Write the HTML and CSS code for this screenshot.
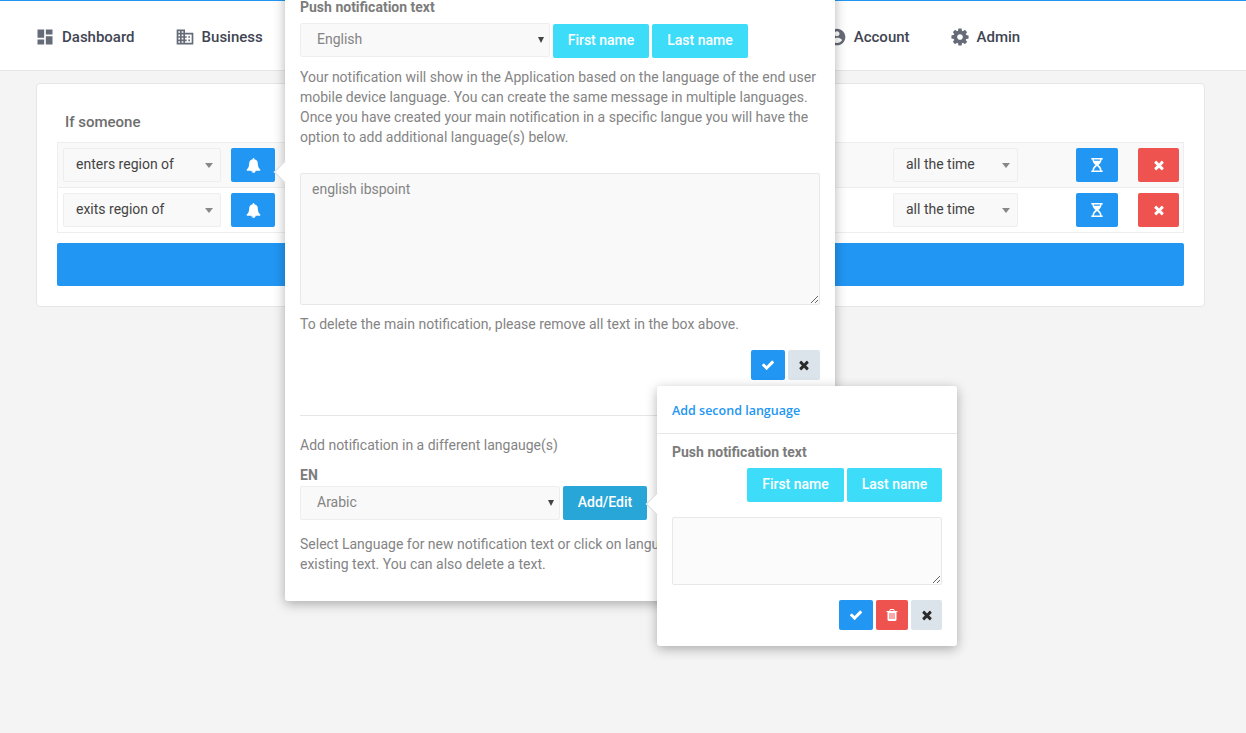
FILE: index.html
```html
<!DOCTYPE html>
<html lang="en">
<head>
  <meta charset="UTF-8" />
  <meta name="viewport" content="width=device-width, initial-scale=1" />
  <title>Push notification rules</title>
  <link rel="stylesheet" href="styles.css">
</head>
<body>
  <svg class="sprite" width="0" height="0">
    <symbol id="i-check" viewBox="0 0 1792 1792"><path d="M1671 566q0 40-28 68l-724 724-136 136q-28 28-68 28t-68-28l-136-136-362-362q-28-28-28-68t28-68l136-136q28-28 68-28t68 28l294 295 656-657q28-28 68-28t68 28l136 136q28 28 28 68z"/></symbol>
    <symbol id="i-times" viewBox="0 0 1792 1792"><path d="M1490 1322q0 40-28 68l-136 136q-28 28-68 28t-68-28l-294-294-294 294q-28 28-68 28t-68-28l-136-136q-28-28-28-68t28-68l294-294-294-294q-28-28-28-68t28-68l136-136q28-28 68-28t68 28l294 294 294-294q28-28 68-28t68 28l136 136q28 28 28 68t-28 68l-294 294 294 294q28 28 28 68z"/></symbol>
    <symbol id="i-bell" viewBox="0 0 1792 1792"><path d="M912 1696q0-16-16-16-59 0-101.5-42.5t-42.5-101.5q0-16-16-16t-16 16q0 73 51.5 124.5t124.5 51.5q16 0 16-16zm816-288q0 52-38 90t-90 38h-448q0 106-75 181t-181 75-181-75-75-181h-448q-52 0-90-38t-38-90q50-42 91-88t85-119.5 74.5-158.5 50-206 19.5-260q0-152 117-282.5t307-158.5q-8-19-8-39 0-40 28-68t68-28 68 28 28 68q0 20-8 39 190 28 307 158.5t117 282.5q0 139 19.5 260t50 206 74.5 158.5 85 119.5 91 88z"/></symbol>
    <symbol id="i-hourglass" viewBox="0 0 16 16"><path fill-rule="evenodd" d="M1.500 0h13v1.600h-1.300c0 3-1.700 5-3.600 6.400 1.900 1.400 3.600 3.400 3.600 6.400h1.300V16h-13v-1.600h1.300c0-3 1.700-5 3.600-6.400-1.900-1.400-3.600-3.400-3.600-6.400H1.500V0zm3 1.600c0 .4.100.9.200 1.400h6.600c.1-.5.200-1 .2-1.400h-7zM8 9c-1.900 1.200-3.300 3-3.500 5.400h7C11.300 12 9.900 10.200 8 9z"/></symbol>
    <symbol id="i-trash" viewBox="0 0 1792 1792"><path d="M704 1376v-704q0-14-9-23t-23-9h-64q-14 0-23 9t-9 23v704q0 14 9 23t23 9h64q14 0 23-9t9-23zm256 0v-704q0-14-9-23t-23-9h-64q-14 0-23 9t-9 23v704q0 14 9 23t23 9h64q14 0 23-9t9-23zm256 0v-704q0-14-9-23t-23-9h-64q-14 0-23 9t-9 23v704q0 14 9 23t23 9h64q14 0 23-9t9-23zm-544-992h448l-48-117q-7-9-17-11h-317q-10 2-17 11zm928 32v64q0 14-9 23t-23 9h-96v948q0 83-47 143.5t-113 60.5h-832q-66 0-113-58.5t-47-141.5v-952h-96q-14 0-23-9t-9-23v-64q0-14 9-23t23-9h309l70-167q15-37 54-63t79-26h320q40 0 79 26t54 63l70 167h309q14 0 23 9t9 23z"/></symbol>
  </svg>

  <nav class="navbar">
    <a class="nav-item">
      <svg class="nav-icon" viewBox="0 0 24 24"><path d="M3 13h8V3H3v10zm0 8h8v-6H3v6zm10 0h8V11h-8v10zm0-18v6h8V3h-8z"/></svg>
      Dashboard
    </a>
    <a class="nav-item">
      <svg class="nav-icon" viewBox="0 0 24 24"><path d="M12 7V3H2v18h20V7H12zM6 19H4v-2h2v2zm0-4H4v-2h2v2zm0-4H4V9h2v2zm0-4H4V5h2v2zm4 12H8v-2h2v2zm0-4H8v-2h2v2zm0-4H8V9h2v2zm0-4H8V5h2v2zm10 12h-8v-2h2v-2h-2v-2h2v-2h-2V9h8v10zm-2-8h-2v2h2v-2zm0 4h-2v2h2v-2z"/></svg>
      Business
    </a>
    <div class="nav-spacer"></div>
    <a class="nav-item">
      <svg class="nav-icon" viewBox="0 0 24 24"><path d="M12 2C6.480 2 2 6.480 2 12s4.480 10 10 10 10-4.480 10-10S17.520 2 12 2zm0 3c1.660 0 3 1.340 3 3s-1.340 3-3 3-3-1.340-3-3 1.340-3 3-3zm0 14.200c-2.500 0-4.710-1.280-6-3.220.03-1.990 4-3.080 6-3.080 1.990 0 5.970 1.090 6 3.080-1.290 1.940-3.500 3.220-6 3.220z"/></svg>
      Account
    </a>
    <a class="nav-item">
      <svg class="nav-icon" viewBox="0 0 1792 1792"><path d="M1152 896q0-106-75-181t-181-75-181 75-75 181 75 181 181 75 181-75 75-181zm512-109v222q0 12-8 23t-20 13l-185 28q-19 54-39 91 35 50 107 138 10 12 10 25t-9 23q-27 37-99 108t-94 71q-12 0-26-9l-138-108q-44 23-91 38-16 136-29 186-7 28-36 28h-222q-14 0-24.500-8.500t-11.500-21.500l-28-184q-49-16-90-37l-141 107q-10 9-25 9-14 0-25-11-126-114-165-168-7-10-7-23 0-12 8-23 15-21 51-66.500t54-70.500q-27-50-41-99l-183-27q-13-2-21-12.500t-8-23.500v-222q0-12 8-23t19-13l186-28q14-46 39-92-40-57-107-138-10-12-10-24 0-10 9-23 26-36 98.500-107.500t94.500-71.500q13 0 26 10l138 107q44-23 91-38 16-136 29-186 7-28 36-28h222q14 0 24.500 8.500t11.500 21.500l28 184q49 16 90 37l142-107q9-9 24-9 13 0 25 10 129 119 165 170 7 8 7 22 0 12-8 23-15 21-51 66.500t-54 70.500q26 50 41 98l183 28q13 2 21 12.500t8 23.500z"/></svg>
      Admin
    </a>
  </nav>

  <main class="card">
    <h4 class="rule-title">If someone</h4>
    <div class="rule-table">
      <div class="rule-row striped">
        <div class="select-wrap when"><select><option>enters region of</option></select></div>
        <button class="btn btn-blue btn-bell"><svg class="icon"><use href="#i-bell"/></svg></button>
        <div class="rule-spacer"></div>
        <div class="select-wrap time"><select><option>all the time</option></select></div>
        <button class="btn btn-blue btn-glass"><svg class="icon"><use href="#i-hourglass"/></svg></button>
        <button class="btn btn-red btn-remove"><svg class="icon"><use href="#i-times"/></svg></button>
      </div>
      <div class="rule-row">
        <div class="select-wrap when"><select><option>exits region of</option></select></div>
        <button class="btn btn-blue btn-bell"><svg class="icon"><use href="#i-bell"/></svg></button>
        <div class="rule-spacer"></div>
        <div class="select-wrap time"><select><option>all the time</option></select></div>
        <button class="btn btn-blue btn-glass"><svg class="icon"><use href="#i-hourglass"/></svg></button>
        <button class="btn btn-red btn-remove"><svg class="icon"><use href="#i-times"/></svg></button>
      </div>
    </div>
    <button class="add-bar"></button>
  </main>

  <section class="popover popover-main">
    <div class="popover-arrow"></div>
    <label class="field-label">Push notification text</label>
    <div class="lang-row">
      <div class="select-wrap native lang-main"><select><option>English</option></select></div>
      <button class="btn btn-cyan name-first">First name</button>
      <button class="btn btn-cyan name-last">Last name</button>
    </div>
    <p class="help help-top">Your notification will show in the Application based on the language of the end user mobile device language. You can create the same message in multiple languages. Once you have created your main notification in a specific langue you will have the option to add additional language(s) below.</p>
    <textarea class="text-main">english ibspoint</textarea>
    <p class="help help-delete">To delete the main notification, please remove all text in the box above.</p>
    <div class="actions actions-main">
      <button class="btn btn-blue btn-ok"><svg class="icon"><use href="#i-check"/></svg></button>
      <button class="btn btn-grey btn-close"><svg class="icon"><use href="#i-times"/></svg></button>
    </div>
    <hr class="divider">
    <p class="help help-add">Add notification in a different langauge(s)</p>
    <label class="field-label lang-code">EN</label>
    <div class="lang-row add-row">
      <div class="select-wrap native lang-add"><select><option>Arabic</option></select></div>
      <button class="btn btn-teal">Add/Edit</button>
    </div>
    <p class="help help-select">Select Language for new notification text or click on language code to edit<br>existing text. You can also delete a text.</p>
  </section>

  <section class="popover popover-second">
    <div class="popover-arrow"></div>
    <h5 class="popover-title">Add second language</h5>
    <div class="popover-body">
      <label class="field-label">Push notification text</label>
      <div class="name-row">
        <button class="btn btn-cyan name-first">First name</button>
        <button class="btn btn-cyan name-last">Last name</button>
      </div>
      <textarea class="text-second"></textarea>
      <div class="actions actions-second">
        <button class="btn btn-blue btn-ok"><svg class="icon"><use href="#i-check"/></svg></button>
        <button class="btn btn-red btn-trash"><svg class="icon"><use href="#i-trash"/></svg></button>
        <button class="btn btn-grey btn-close"><svg class="icon"><use href="#i-times"/></svg></button>
      </div>
    </div>
  </section>
</body>
</html>
```

FILE: styles.css
```css
* {
  box-sizing: border-box;
}

body {
  margin: 0;
  min-height: 100vh;
  overflow: hidden;
  background: #f4f4f4;
  font-family: Roboto, sans-serif;
  font-size: 14px;
  line-height: 20px;
  color: #848484;
}

.sprite {
  position: absolute;
}

/* navbar */
.navbar {
  display: flex;
  align-items: center;
  gap: 40px;
  height: 71px;
  padding: 3px 0 0 35px;
  background: #fff;
  border-top: 1px solid #2196f3;
  border-bottom: 1px solid #e6e6e6;
}

.nav-item {
  display: flex;
  align-items: center;
  gap: 7px;
  font-size: 15px;
  font-weight: 500;
  color: #3f4553;
}

.nav-icon {
  width: 20px;
  height: 20px;
  fill: #666b78;
}

.nav-spacer {
  width: 484px;
}

/* rules card */
.card {
  margin: 12px 41px 0 36px;
  height: 224px;
  padding: 0 20px;
  background: #fff;
  border: 1px solid #e6e6e6;
  border-radius: 4px;
}

.rule-title {
  margin: 28px 0 10px 8px;
  font-size: 15px;
  font-weight: 500;
  color: #6e6e6e;
}

.rule-table {
  border: 1px solid #eee;
}

.rule-row {
  display: flex;
  align-items: center;
  height: 44px;
  padding: 0 4px 0 5px;
}

.rule-row + .rule-row {
  height: 45px;
  border-top: 1px solid #eee;
}

.striped {
  background: #f9f9f9;
}

.rule-spacer {
  flex: 1;
}

.select-wrap {
  position: relative;
  height: 34px;
}

.select-wrap select {
  width: 100%;
  height: 100%;
  padding: 0 12px 2px;
  appearance: none;
  background: #f9f9f9;
  border: 1px solid #eee;
  border-radius: 2px;
  font-family: inherit;
  font-size: 14px;
  color: #444;
}

.select-wrap::after {
  content: "";
  position: absolute;
  top: 15px;
  right: 8px;
  border-left: 4px solid transparent;
  border-right: 4px solid transparent;
  border-top: 5px solid #888;
}

.when {
  width: 158px;
  margin-right: 10px;
}

.time {
  width: 125px;
  margin-right: 58px;
}

.native select {
  padding-left: 16px;
  color: #848484;
}

.native::after {
  top: 14px;
  right: 6px;
  border-left-width: 3px;
  border-right-width: 3px;
  border-top: 6px solid #444;
}

/* buttons */
.btn {
  display: inline-flex;
  align-items: center;
  justify-content: center;
  height: 34px;
  padding: 0;
  border: none;
  border-radius: 2px;
  font-family: inherit;
  font-size: 14px;
  font-weight: 500;
  color: #fff;
  cursor: pointer;
}

.icon {
  width: 14px;
  height: 14px;
  fill: #fff;
}

.btn-blue {
  background: #2196f3;
}

.btn-red {
  background: #ef5350;
}

.btn-cyan {
  padding-bottom: 2px;
  background: #3ddcf9;
}

.btn-teal {
  width: 84px;
  padding-bottom: 2px;
  background: #29a6d8;
}

.btn-grey {
  background: #dbe4ea;
}

.btn-grey .icon {
  fill: #2b2b2b;
}

.btn-bell {
  width: 44px;
}

.btn-bell .icon {
  width: 15px;
  height: 15px;
}

.btn-glass {
  width: 42px;
  margin-right: 20px;
}

.btn-remove {
  width: 41px;
}

.name-first {
  width: 96px;
}

.name-last {
  width: 96px;
}

.btn-ok,
.btn-close,
.btn-trash {
  height: 30px;
}

.btn-ok {
  width: 34px;
}

.btn-close,
.btn-trash {
  width: 32px;
}

.add-bar {
  display: block;
  width: 100%;
  height: 43px;
  margin-top: 10px;
  background: #2196f3;
  border: none;
  border-radius: 2px;
}

/* popovers */
.popover {
  position: absolute;
  background: #fff;
  border-radius: 3px;
  box-shadow: 0 3px 12px rgba(0, 0, 0, 0.3);
}

.popover-arrow {
  position: absolute;
  width: 16px;
  height: 16px;
  background: #fff;
  border-left: 1px solid #ddd;
  border-bottom: 1px solid #ddd;
  transform: rotate(45deg);
}

.popover-main {
  top: -13px;
  left: 285px;
  width: 550px;
  padding: 10px 15px 27px;
}

.popover-main .popover-arrow {
  top: 177px;
  left: -8px;
}

.popover-second {
  top: 386px;
  left: 657px;
  width: 300px;
}

.popover-second .popover-arrow {
  top: 110px;
  left: -8px;
}

.popover-title {
  margin: 0;
  height: 48px;
  padding: 15px 15px 0;
  border-bottom: 1px solid #e6e6e6;
  font-family: "Open Sans", sans-serif;
  font-size: 12.5px;
  font-weight: 600;
  color: #2196f3;
}

.popover-body {
  padding: 8px 15px 16px;
}

.field-label {
  display: block;
  font-weight: 700;
  color: #7c7c7c;
}

.lang-row {
  display: flex;
  align-items: flex-start;
  gap: 3px;
  height: 34px;
  margin-top: 6px;
}

.lang-main {
  width: 250px;
}

.lang-row .name-first,
.lang-row .name-last {
  margin-top: 1px;
}

.help {
  margin: 0;
}

.help-top {
  margin-top: 10px;
}

textarea {
  display: block;
  width: 100%;
  padding: 7px 11px;
  background: #f9f9f9;
  border: 1px solid #e8e8e8;
  border-radius: 2px;
  font-family: inherit;
  font-size: 14px;
  color: #848484;
}

.text-main {
  height: 132px;
  margin-top: 26px;
}

.help-delete {
  margin-top: 9px;
}

.actions {
  display: flex;
  justify-content: flex-end;
  gap: 3px;
}

.actions-main {
  margin-top: 16px;
}

.divider {
  margin: 35px -15px 0 0;
  border: none;
  border-top: 1px solid #e6e6e6;
}

.help-add {
  margin-top: 19px;
}

.lang-code {
  margin-top: 10px;
}

.add-row {
  margin-top: 1px;
}

.lang-add {
  width: 260px;
}

.help-select {
  margin-top: 14px;
}

.name-row {
  display: flex;
  justify-content: flex-end;
  gap: 3px;
  margin-top: 6px;
}

.name-row .name-first {
  width: 97px;
}

.name-row .name-last {
  width: 95px;
}

.text-second {
  height: 68px;
  margin-top: 15px;
  background: #fbfbfb;
}

.actions-second {
  margin-top: 15px;
}

.actions-second .btn-close {
  width: 31px;
}
```
